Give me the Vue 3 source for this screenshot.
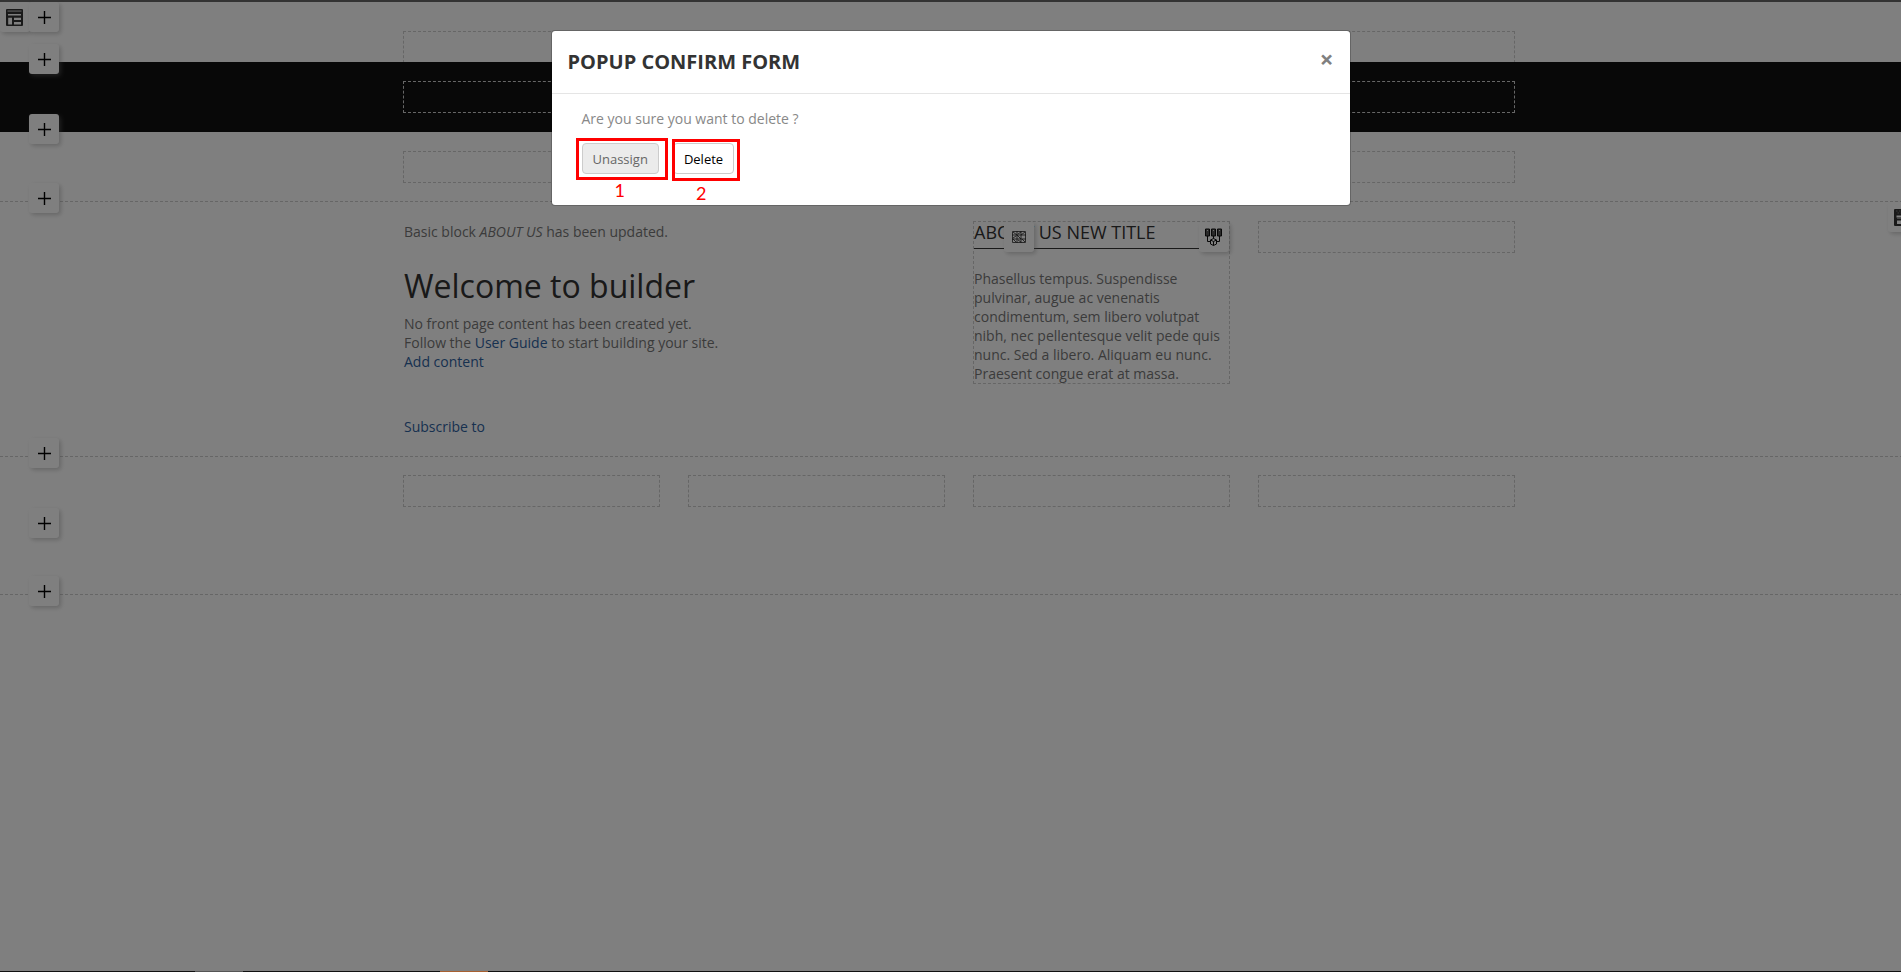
<script setup>
import { ref } from 'vue'

const open = ref(true)
</script>

<template>
  <div class="screen">
    <div class="page">
      <section class="row row-first">
        <div class="tools">
          <button class="tool" aria-label="Row layout">
            <svg width="18" height="17" viewBox="0 0 18 17">
              <rect width="17" height="17" rx="1" fill="#333" />
              <path d="M1.500 1.200h14v1.800h-14z" fill="#888" />
              <path d="M2 5h13v1.500H2zM2.200 8.700h3.800v6.800H2.200zM8 8.700h7v2.300H8zM8 13h7v2.400H8z" fill="#fff" />
            </svg>
          </button>
          <button class="tool" aria-label="Add row"><svg width="13" height="13" viewBox="0 0 13 13"><path d="M6.500 0v13M0 6.500h13" stroke="#000" stroke-width="1.400" /></svg></button>
        </div>
        <div class="grid"><div class="cell wide"></div></div>
      </section>

      <section class="row row-dark">
        <button class="tool add" aria-label="Add row"><svg width="13" height="13" viewBox="0 0 13 13"><path d="M6.500 0v13M0 6.500h13" stroke="#000" stroke-width="1.400" /></svg></button>
        <div class="grid"><div class="cell wide"></div></div>
      </section>

      <section class="row row-short">
        <button class="tool add" aria-label="Add row"><svg width="13" height="13" viewBox="0 0 13 13"><path d="M6.500 0v13M0 6.500h13" stroke="#000" stroke-width="1.400" /></svg></button>
        <div class="grid"><div class="cell wide"></div></div>
      </section>

      <section class="row row-line">
        <button class="tool add" aria-label="Add row"><svg width="13" height="13" viewBox="0 0 13 13"><path d="M6.500 0v13M0 6.500h13" stroke="#000" stroke-width="1.400" /></svg></button>
        <button class="tool row-settings" aria-label="Row settings">
          <svg width="18" height="17" viewBox="0 0 18 17">
            <rect width="18" height="17" rx="1" fill="#333" />
            <path d="M2 2h1.500M5 2h1.500M8 2h1.500M3.500 4H5M6.500 4H8" stroke="#777" />
            <path d="M2.500 6.500h13v2h-13zM3 11.500h12v3.500H3z" fill="#fff" />
            <path d="M3 9.500h12" stroke="#888" />
          </svg>
        </button>
        <div class="grid">
          <div class="main">
            <p>Basic block <em>ABOUT US</em> has been updated.</p>
            <h1>Welcome to builder</h1>
            <p>No front page content has been created yet.</p>
            <p>Follow the <a href="#">User Guide</a> to start building your site.</p>
            <p><a href="#">Add content</a></p>
            <p class="subscribe"><a href="#">Subscribe to</a></p>
          </div>
          <div class="cell block">
            <h2>ABOUT US NEW TITLE</h2>
            <p>Phasellus tempus. Suspendisse pulvinar, augue ac venenatis condimentum, sem libero volutpat nibh, nec pellentesque velit pede quis nunc. Sed a libero. Aliquam eu nunc. Praesent congue erat at massa.</p>
            <button class="tool block-edit" aria-label="Edit block">
              <svg width="14" height="12" viewBox="0 0 14 12">
                <path d="M.5.500h13v11H.5z" fill="#fff" stroke="#555" />
                <path d="M0 4h14M0 8h14M5 0v12M9 0v12M1 1l4 3M5 4l4 4M9 4l4-3M1 8l3 3M6 9l3 2M10 8l3 3M1 7l3-2M6 3l3-2" stroke="#222" stroke-width=".8" />
              </svg>
            </button>
            <button class="tool block-add" aria-label="Add block">
              <svg width="19" height="18" viewBox="0 0 19 18">
                <path d="M.5 1h4v7h-4zM6.500 1h4v7h-4zM12.500 1h4v7h-4z" fill="#555" stroke="#111" />
                <path d="M2 2.500h1M8 2.500h1M14 2.500h1" stroke="#ddd" />
                <path d="M2.500 8v5.500H6M14.500 8v5.500H11M8.500 8v3" fill="none" stroke="#111" />
                <path d="M8.500 10.500l3 1.500v4l-3 1.500-3-1.500v-4z" fill="#fff" stroke="#111" />
                <path d="M5.500 12l3 1.500 3-1.500M8.500 13.500v4" fill="none" stroke="#111" />
              </svg>
            </button>
          </div>
          <div class="cell"></div>
        </div>
      </section>

      <section class="row row-line row-four">
        <button class="tool add" aria-label="Add row"><svg width="13" height="13" viewBox="0 0 13 13"><path d="M6.500 0v13M0 6.500h13" stroke="#000" stroke-width="1.400" /></svg></button>
        <div class="grid">
          <div v-for="n in 4" :key="n" class="cell"></div>
        </div>
      </section>

      <section class="row row-empty">
        <button class="tool add" aria-label="Add row"><svg width="13" height="13" viewBox="0 0 13 13"><path d="M6.500 0v13M0 6.500h13" stroke="#000" stroke-width="1.400" /></svg></button>
      </section>

      <section class="row row-line">
        <button class="tool add" aria-label="Add row"><svg width="13" height="13" viewBox="0 0 13 13"><path d="M6.500 0v13M0 6.500h13" stroke="#000" stroke-width="1.400" /></svg></button>
      </section>
    </div>

    <div v-if="open" class="backdrop">
      <div class="modal" role="dialog" aria-labelledby="modal-title">
        <header class="modal-header">
          <h4 id="modal-title">POPUP CONFIRM FORM</h4>
          <button class="close" aria-label="Close" @click="open = false">×</button>
        </header>
        <div class="modal-body">
          <p>Are you sure you want to delete ?</p>
          <div class="actions">
            <div class="action">
              <button class="btn btn-muted">Unassign</button>
              <span class="mark mark-one"></span>
              <span class="mark-label label-one">1</span>
            </div>
            <div class="action">
              <button class="btn">Delete</button>
              <span class="mark mark-two"></span>
              <span class="mark-label label-two">2</span>
            </div>
          </div>
        </div>
      </div>
    </div>

    <footer class="taskbar">
      <span class="task"></span>
      <span class="task task-active"></span>
    </footer>
  </div>
</template>

<style>
body {
  margin: 0;
  background: #fff;
}
</style>

<style scoped>
.screen {
  position: relative;
  display: flex;
  flex-direction: column;
  min-height: 100vh;
  overflow: hidden;
  font-family: "Open Sans", "Noto Sans", sans-serif;
  font-size: 14px;
  line-height: 19px;
  color: #777;
}
h1, h2, h4, p { margin: 0; font-weight: 400; }
a { color: #2f629f; text-decoration: none; }

.page {
  flex: 1;
  margin-right: -17px;
  border-top: 2px solid #666;
}
.row {
  position: relative;
  box-sizing: border-box;
  padding: 19px 0;
}
.row-first { height: 60px; padding-top: 29px; }
.row-dark { background: #111; }
.row-dark .cell { border-color: #ccc; }
.row-short { padding-bottom: 18px; }
.row-line { border-top: 1px dashed #ccc; }
.row-four { padding-top: 18px; }
.row-empty { height: 68px; }

.grid {
  display: grid;
  grid-template-columns: repeat(4, 1fr);
  gap: 28px;
  align-items: start;
  max-width: 1112px;
  margin: 0 auto;
}
.cell {
  position: relative;
  box-sizing: border-box;
  min-height: 32px;
  border: 1px dashed #ccc;
}
.wide { grid-column: 1 / -1; }

.tools { position: absolute; top: 0; left: 0; display: flex; z-index: 2; }
.tools .tool + .tool { margin-left: -1px; }
.tool {
  display: flex;
  align-items: center;
  justify-content: center;
  width: 30px;
  height: 30px;
  padding: 0;
  border: 0;
  border-radius: 3px;
  background: #fff;
  box-shadow: 2px 2px 4px rgba(136, 136, 136, 0.4);
}
.add {
  position: absolute;
  top: -18px;
  left: 29px;
  z-index: 2;
}
.row-line .add { top: -19px; }
.row-settings { position: absolute; top: 0; right: 0; }
.block-edit { position: absolute; top: 0; left: 30px; }
.block-add { position: absolute; top: 0; right: 0; }

.main { grid-column: span 2; padding: 1px; }
.main h1 {
  margin: 28px 0 11px;
  font-size: 32px;
  line-height: 34px;
  color: #333;
}
.main .subscribe { margin-top: 46px; }
.block h2 {
  margin-bottom: 20px;
  padding-bottom: 6px;
  border-bottom: 1px solid #333;
  font-size: 18px;
  line-height: 20px;
  color: #333;
}

.backdrop {
  position: absolute;
  inset: 0;
  z-index: 5;
  background: rgba(0, 0, 0, 0.5);
}
.modal {
  box-sizing: border-box;
  max-width: 800px;
  margin: 30px auto;
  border: 1px solid rgba(0, 0, 0, 0.2);
  border-radius: 4px;
  background: #fff;
  background-clip: padding-box;
}
.modal-header {
  display: flex;
  justify-content: space-between;
  box-sizing: border-box;
  height: 63px;
  padding: 16px 16px 0;
  border-bottom: 1px solid #e5e5e5;
}
.modal-header h4 { font-size: 20px; line-height: 30px; font-weight: 700; color: #333; }
.close {
  align-self: flex-start;
  padding: 0;
  border: 0;
  background: none;
  font: 700 24px/24px "Open Sans", sans-serif;
  color: #808080;
}
.modal-body { padding: 15px 30px 31px; }
.modal-body p { color: #888; }
.actions { display: flex; gap: 14px; margin-top: 15px; }
.action { position: relative; }
.btn {
  height: 31px;
  padding: 0 10px;
  border: 1px solid #ccc;
  border-radius: 4px;
  background: #fff;
  font: 13px/18px "Open Sans", sans-serif;
  color: #000;
}
.btn-muted { background: #ebebeb; color: #666; }
.mark {
  position: absolute;
  box-sizing: border-box;
  width: 68px;
  height: 42px;
  border: 3px solid #f00;
}
.mark-one { top: -5px; left: -6px; width: 92px; }
.mark-two { top: -4px; left: -1px; }
.mark-label {
  position: absolute;
  font: 18px/18px Lato, sans-serif;
  color: #f00;
}
.label-one { top: 38px; left: 33px; }
.label-two { top: 41px; left: 23px; }

.taskbar {
  position: absolute;
  right: 0;
  bottom: 0;
  left: 0;
  z-index: 6;
  display: flex;
  gap: 197px;
  height: 1px;
  padding-left: 195px;
  background: #111;
}
.task { width: 48px; background: #555; }
.task-active { background: #a86030; }
</style>
